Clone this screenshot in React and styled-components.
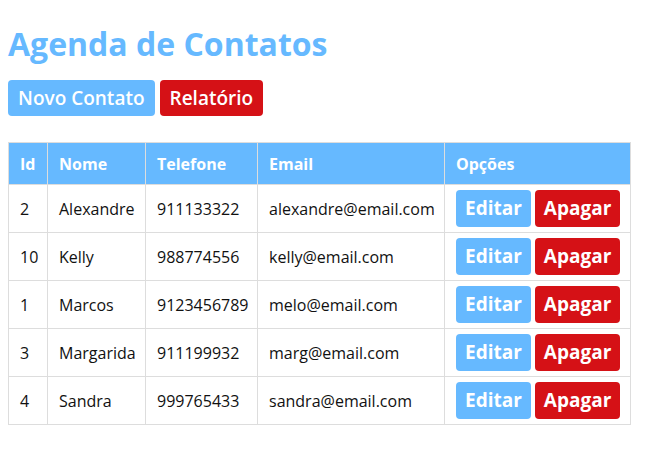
import React from "react";
import styled, { createGlobalStyle } from "styled-components";

const Global = createGlobalStyle`
  html, body { margin: 0; padding: 0; background: #fff; }
  body { font-family: "Open Sans", "Liberation Sans", sans-serif; color: #111; }
`;

const Page = styled.div`
  padding: 8px;
`;

const Title = styled.h1`
  margin: 16px 0 16px;
  font-size: 32px;
  line-height: 40px;
  font-weight: 700;
  color: #66b9ff;
`;

const Toolbar = styled.div`
  display: flex;
  gap: 5px;
  margin-bottom: 26px;
`;

const Button = styled.button`
  border: none;
  border-radius: 4px;
  font-family: "Open Sans", "Liberation Sans", sans-serif;
  color: #fff;
  cursor: pointer;
  background: ${(p) => (p.$variant === "danger" ? "#d51116" : "#66b9ff")};
  height: ${(p) => (p.$size === "lg" ? "37px" : "36px")};
  font-size: ${(p) => (p.$size === "lg" ? "19px" : "19px")};
  font-weight: ${(p) => (p.$size === "lg" ? 700 : 600)};
  padding: ${(p) => (p.$size === "lg" ? "0 9px" : "0 10px")};
  line-height: 1;
`;

const Table = styled.table`
  border-collapse: collapse;
  table-layout: fixed;
  width: 622px;
`;

const Th = styled.th`
  background: #66b9ff;
  color: #fff;
  font-weight: 700;
  font-size: 16px;
  text-align: left;
  height: 42px;
  padding: 0 11px;
  border: 1px solid #ddd;
  box-sizing: border-box;
`;

const Td = styled.td`
  font-size: 16px;
  height: 47px;
  padding: 0 11px;
  border: 1px solid #ddd;
  vertical-align: middle;
`;

const Actions = styled.div`
  display: flex;
  gap: 4px;
`;

const cols = [39, 98, 112, 187, 186];

const contacts = [
  { id: 2, nome: "Alexandre", tel: "911133322", email: "alexandre@email.com" },
  { id: 10, nome: "Kelly", tel: "988774556", email: "kelly@email.com" },
  { id: 1, nome: "Marcos", tel: "9123456789", email: "melo@email.com" },
  { id: 3, nome: "Margarida", tel: "911199932", email: "marg@email.com" },
  { id: 4, nome: "Sandra", tel: "999765433", email: "sandra@email.com" },
];

export default function App() {
  return (
    <Page>
      <Global />
      <Title>Agenda de Contatos</Title>
      <Toolbar>
        <Button>Novo Contato</Button>
        <Button $variant="danger">Relatório</Button>
      </Toolbar>
      <Table>
        <colgroup>
          {cols.map((w, i) => (
            <col key={i} style={{ width: w }} />
          ))}
        </colgroup>
        <thead>
          <tr>
            <Th>Id</Th>
            <Th>Nome</Th>
            <Th>Telefone</Th>
            <Th>Email</Th>
            <Th>Opções</Th>
          </tr>
        </thead>
        <tbody>
          {contacts.map((c) => (
            <tr key={c.id}>
              <Td>{c.id}</Td>
              <Td>{c.nome}</Td>
              <Td>{c.tel}</Td>
              <Td>{c.email}</Td>
              <Td>
                <Actions>
                  <Button $size="lg">Editar</Button>
                  <Button $size="lg" $variant="danger">Apagar</Button>
                </Actions>
              </Td>
            </tr>
          ))}
        </tbody>
      </Table>
    </Page>
  );
}
